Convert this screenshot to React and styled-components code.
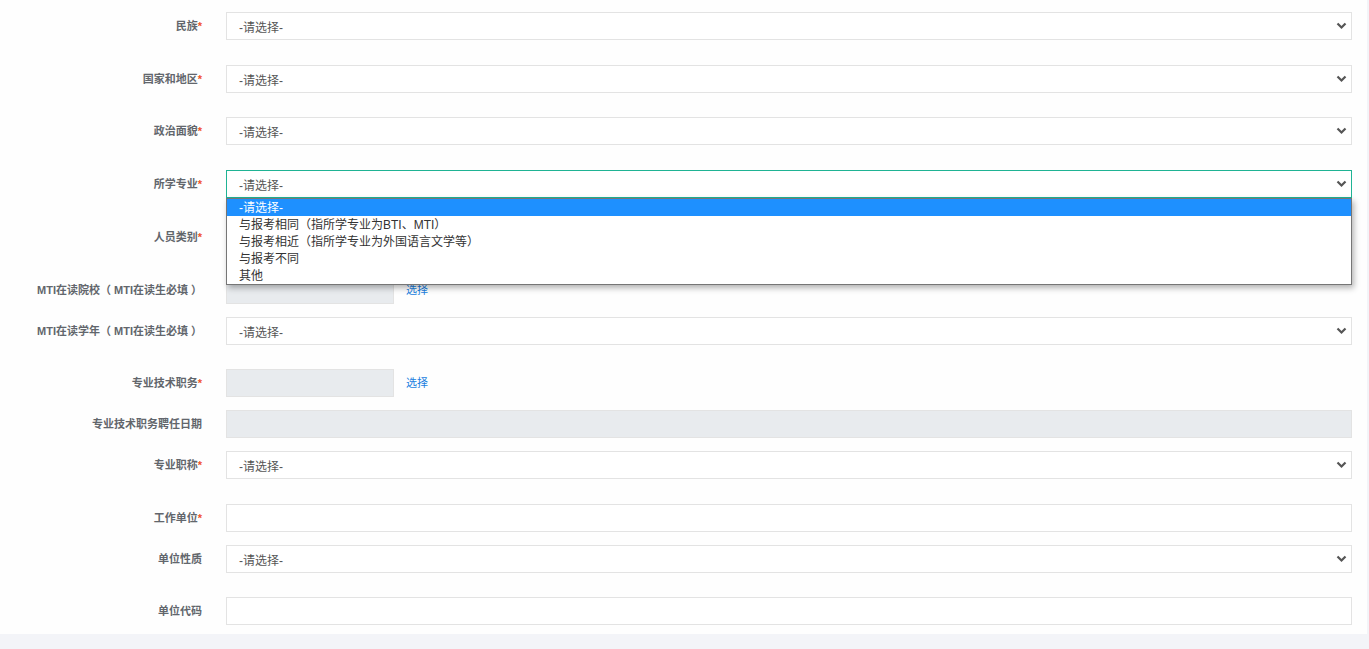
import React from "react";
import styled, { createGlobalStyle } from "styled-components";

const GlobalStyle = createGlobalStyle`
  html, body {
    margin: 0;
    padding: 0;
    background: #f3f4f8;
    font-family: "Liberation Sans", "Noto Sans CJK SC", sans-serif;
  }
`;

const Page = styled.div`
  width: 1369px;
  height: 649px;
  background: #f3f4f8;
  overflow: hidden;
`;

const Panel = styled.div`
  width: 1367px;
  height: 634px;
  background: #fefefe;
  box-sizing: border-box;
  padding: 12px 15px 0 0;
`;

const Row = styled.div`
  display: flex;
  align-items: center;
  height: 28px;
  margin-bottom: ${(p) => p.$gap}px;
  position: relative;
`;

const Label = styled.div`
  width: 202px;
  flex-shrink: 0;
  text-align: right;
  font-size: 11px;
  font-weight: bold;
  color: #62666c;
  white-space: nowrap;
  margin-right: 24px;
  margin-top: -2px;
`;

const Star = styled.span`
  color: #f0522b;
`;

const Field = styled.div`
  flex: 1;
  height: 28px;
  box-sizing: border-box;
  border: 1px solid ${(p) => (p.$focus ? "#1fb394" : "#e3e3e3")};
  background: ${(p) => (p.$disabled ? "#e8ebee" : "#fff")};
  display: flex;
  align-items: center;
  justify-content: space-between;
  padding: 0 4px 0 12px;
  font-size: 12px;
  color: #555;
  ${(p) => p.$short && "flex: 0 0 168px;"}
`;

const Pick = styled.a`
  margin-left: 12px;
  margin-top: -3px;
  font-size: 11px;
  color: #1a7fe0;
  cursor: pointer;
`;

const Menu = styled.div`
  position: absolute;
  top: 28px;
  left: 226px;
  right: 0;
  z-index: 5;
  background: #fff;
  border: 1px solid #767676;
  box-shadow: 2px 3px 6px rgba(0, 0, 0, 0.3);
  padding: 0;
`;

const Option = styled.div`
  height: 17px;
  line-height: 18px;
  padding-left: 12px;
  font-size: 12px;
  color: ${(p) => (p.$active ? "#fff" : "#333")};
  background: ${(p) => (p.$active ? "#1e90ff" : "transparent")};
`;

const Chevron = () => (
  <svg width="11" height="8" viewBox="0 0 11 8">
    <path d="M1.5 1.5 L5.5 5.5 L9.5 1.5" fill="none" stroke="#555" strokeWidth="2.2" />
  </svg>
);

const Select = ({ focus }) => (
  <Field $focus={focus}>
    <span>-请选择-</span>
    <Chevron />
  </Field>
);

const options = [
  "-请选择-",
  "与报考相同（指所学专业为BTI、MTI）",
  "与报考相近（指所学专业为外国语言文学等）",
  "与报考不同",
  "其他",
];

const FormRow = ({ label, required, gap, children }) => (
  <Row $gap={gap}>
    <Label>
      {label}
      {required && <Star>*</Star>}
    </Label>
    {children}
  </Row>
);

export default function App() {
  return (
    <Page>
      <GlobalStyle />
      <Panel>
        <FormRow label="民族" required gap={25}>
          <Select />
        </FormRow>
        <FormRow label="国家和地区" required gap={24}>
          <Select />
        </FormRow>
        <FormRow label="政治面貌" required gap={25}>
          <Select />
        </FormRow>
        <Row $gap={25}>
          <Label>
            所学专业<Star>*</Star>
          </Label>
          <Select focus />
          <Menu>
            {options.map((o, i) => (
              <Option key={o} $active={i === 0}>
                {o}
              </Option>
            ))}
          </Menu>
        </Row>
        <FormRow label="人员类别" required gap={25}>
          <Field />
        </FormRow>
        <FormRow label="MTI在读院校（ MTI在读生必填 ）" gap={13}>
          <Field $disabled $short />
          <Pick>选择</Pick>
        </FormRow>
        <FormRow label="MTI在读学年（ MTI在读生必填 ）" gap={24}>
          <Select />
        </FormRow>
        <FormRow label="专业技术职务" required gap={13}>
          <Field $disabled $short />
          <Pick>选择</Pick>
        </FormRow>
        <FormRow label="专业技术职务聘任日期" gap={13}>
          <Field $disabled />
        </FormRow>
        <FormRow label="专业职称" required gap={25}>
          <Select />
        </FormRow>
        <FormRow label="工作单位" required gap={13}>
          <Field />
        </FormRow>
        <FormRow label="单位性质" gap={24}>
          <Select />
        </FormRow>
        <FormRow label="单位代码" gap={0}>
          <Field />
        </FormRow>
      </Panel>
    </Page>
  );
}
